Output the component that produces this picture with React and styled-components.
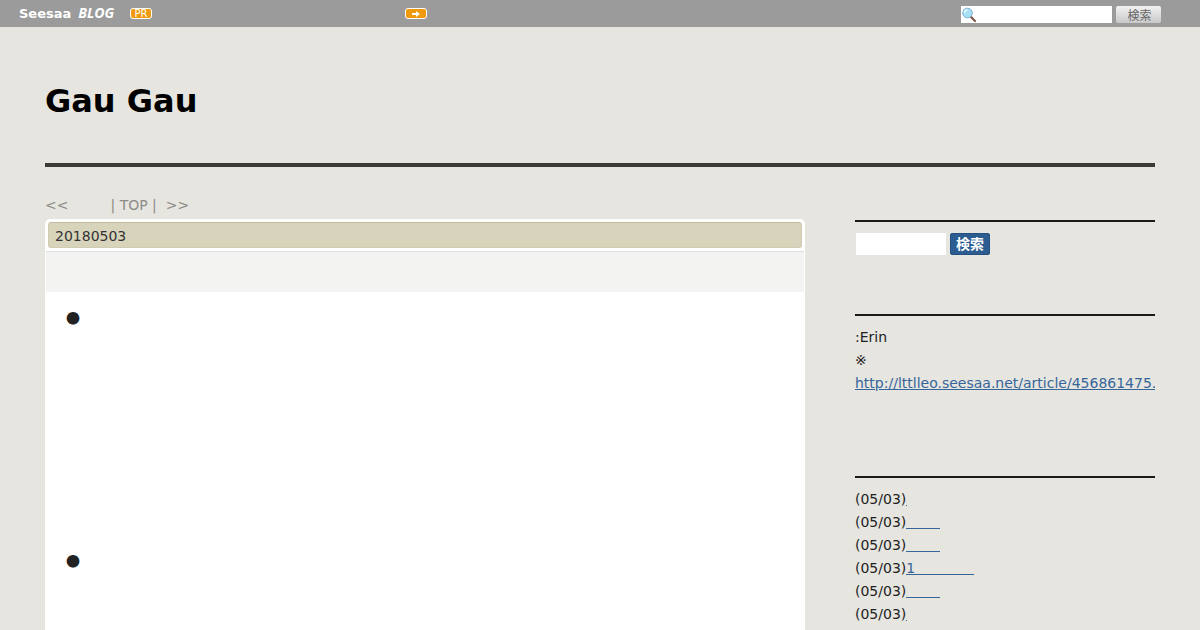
import styled, { createGlobalStyle } from "styled-components";

const GlobalStyle = createGlobalStyle`
  * {
    box-sizing: border-box;
  }
  body {
    margin: 0;
    background-color: #e6e5e0;
    color: #222;
    font-family: "DejaVu Sans", "Noto Sans CJK JP", sans-serif;
    font-size: 14px;
    line-height: 23px;
  }
  html {
    scrollbar-width: none;
  }
`;
const TopBar = styled.div`
  display: flex;
  align-items: center;
  height: 27px;
  padding: 0 39px 0 19px;
  background-color: #9b9b9b;
`;
const Logo = styled.a`
  display: flex;
  align-items: center;
  gap: 7px;
  width: 111px;
  color: #fff;
  font-size: 13px;
  font-weight: bold;
  line-height: 20px;
  text-decoration: none;
`;
const LogoBlog = styled.span`
  font-family: "Open Sans", "Noto Sans", sans-serif;
  font-size: 14px;
  font-style: italic;
  line-height: 16px;
  padding-bottom: 2px;
`;
const PrSlot = styled.div`
  display: flex;
  width: 275px;
`;
const Badge = styled.a`
  display: flex;
  align-items: center;
  justify-content: center;
  width: 22px;
  height: 11px;
  border: 1px solid #fff;
  border-radius: 3px;
  background-color: #f09a10;
  color: #fff;
  font-size: 10px;
  line-height: 9px;
  text-decoration: none;
`;
const TopSearch = styled.form`
  display: flex;
  align-items: center;
  gap: 4px;
  margin-left: auto;
  padding-top: 2px;
`;
const SearchBox = styled.label`
  display: flex;
  align-items: center;
  width: 151px;
  height: 17px;
  background-color: #fff;
`;
const TopInput = styled.input`
  flex: 1;
  min-width: 0;
  height: 17px;
  padding: 0 2px;
  border: 0;
  outline: 0;
  background: none;
  font-size: 12px;
`;
const TopButton = styled.button`
  width: 45px;
  height: 17px;
  padding: 0 0 0 2px;
  border: 0;
  border-radius: 2px;
  background: linear-gradient(#f2f2f2, #c8c8c8);
  color: #666;
  font-family: "Noto Sans CJK JP", sans-serif;
  font-size: 12px;
  line-height: 17px;
`;
const Page = styled.div`
  margin: 0 45px;
`;
const Header = styled.header`
  padding: 54px 0 42px;
  border-bottom: 4px solid #3c3b39;
`;
const Title = styled.h1`
  margin: 0;
  color: #000;
  font-size: 32px;
  line-height: 40px;
`;
const Columns = styled.div`
  display: grid;
  grid-template-columns: minmax(0, 1fr) 300px;
  gap: 50px;
  padding-top: 27px;
`;
const Pager = styled.nav`
  display: flex;
  margin-bottom: 2px;
  color: #8c8b87;
  white-space: pre;
  a {
    color: inherit;
    text-decoration: none;
  }
`;
const PrevLink = styled.a`
  width: 61px;
`;
const Post = styled.article`
  padding: 3px 1px;
  border-radius: 5px 5px 0 0;
  background-color: #fff;
`;
const PostDate = styled.h2`
  margin: 0 2px 3px;
  padding: 2px 6px 0;
  border: 1px solid #d0ccb2;
  border-top-color: #bfbb9f;
  border-radius: 3px;
  background-color: #d8d4bc;
  color: #333;
  font-size: 14px;
  font-weight: normal;
  line-height: 22px;
`;
const PostTitle = styled.div`
  height: 41px;
  border-top: 1px solid #dcdfe6;
  background-color: #f3f3f2;
`;
const PostBody = styled.div`
  padding: 14px 20px;
  font-family: "Noto Sans CJK JP", sans-serif;
`;
const Paragraph = styled.p`
  margin: 0 0 220px;
`;
const Sidebar = styled.aside`
  padding-top: 26px;
`;
const Section = styled.section`
  padding: 10px 0 58px;
  border-top: 2px solid #1a1a18;
  overflow: hidden;
`;
const SideSearch = styled.form`
  display: flex;
  gap: 4px;
  padding: 1px;
`;
const SideInput = styled.input`
  width: 90px;
  height: 22px;
  padding: 0 4px;
  border: 0;
  background-color: #fff;
`;
const SideButton = styled.button`
  width: 40px;
  height: 22px;
  padding: 0 0 2px;
  border: 1px solid #24507f;
  border-radius: 2px;
  background-color: #2c5c90;
  color: #fff;
  font-family: "Noto Sans CJK JP", sans-serif;
  font-size: 14px;
  font-weight: bold;
  line-height: 18px;
`;
const TextLink = styled.a`
  color: #36659a;
`;
const List = styled.ul`
  margin: 0;
  padding: 0;
  list-style: none;
`;
const EntryLink = styled.a`
  display: inline-block;
  width: ${(props) => props.$width}px;
  border-bottom: 1px solid #36659a;
  color: #36659a;
  line-height: 12px;
  text-decoration: none;
`;

const entries = [
  { width: 1 },
  { width: 34 },
  { width: 34 },
  { width: 68, text: "1" },
  { width: 34 },
  { width: 1 },
];

function SearchIcon() {
  return (
    <svg width="16" height="16" viewBox="0 0 16 16" aria-hidden="true">
      <path d="M10 10l4 4" stroke="#80584a" strokeWidth="2.2" strokeLinecap="round" />
      <circle cx="6.5" cy="6" r="4.8" fill="#a9e0f8" stroke="#7cb0d0" />
      <path d="M3.5 6a3 3 0 0 1 3-3" fill="none" stroke="#e4f8ff" strokeWidth="1.5" />
    </svg>
  );
}

function ArrowIcon() {
  return (
    <svg width="10" height="8" viewBox="0 0 10 8" aria-hidden="true">
      <path d="M1 3h4V1l4 3-4 3V5H1z" fill="#fff" />
    </svg>
  );
}

export default function App() {
  return (
    <>
      <GlobalStyle />
      <TopBar>
        <Logo href="#">
          <span>Seesaa</span>
          <LogoBlog>BLOG</LogoBlog>
        </Logo>
        <PrSlot>
          <Badge href="#">PR</Badge>
        </PrSlot>
        <Badge href="#" aria-label="Next blog">
          <ArrowIcon />
        </Badge>
        <TopSearch>
          <SearchBox>
            <SearchIcon />
            <TopInput type="text" aria-label="検索" />
          </SearchBox>
          <TopButton type="button">検索</TopButton>
        </TopSearch>
      </TopBar>
      <Page>
        <Header>
          <Title>Gau Gau</Title>
        </Header>
        <Columns>
          <main>
            <Pager>
              <PrevLink href="#">&lt;&lt;</PrevLink>
              <span> | </span>
              <a href="#">TOP</a>
              <span> |  </span>
              <a href="#">&gt;&gt;</a>
            </Pager>
            <Post>
              <PostDate>20180503</PostDate>
              <PostTitle />
              <PostBody>
                <Paragraph>●</Paragraph>
                <Paragraph>●</Paragraph>
              </PostBody>
            </Post>
          </main>
          <Sidebar>
            <Section>
              <SideSearch>
                <SideInput type="text" aria-label="検索" />
                <SideButton type="button">検索</SideButton>
              </SideSearch>
            </Section>
            <Section>
              :Erin
              <br />
              ※
              <br />
              <TextLink href="#">http://lttlleo.seesaa.net/article/456861475.</TextLink>
              <br />
              &nbsp;
            </Section>
            <Section>
              <List>
                {entries.map((entry, index) => (
                  <li key={index}>
                    (05/03)
                    <EntryLink href="#" $width={entry.width}>
                      {entry.text || "\u00a0"}
                    </EntryLink>
                  </li>
                ))}
              </List>
            </Section>
          </Sidebar>
        </Columns>
      </Page>
    </>
  );
}
